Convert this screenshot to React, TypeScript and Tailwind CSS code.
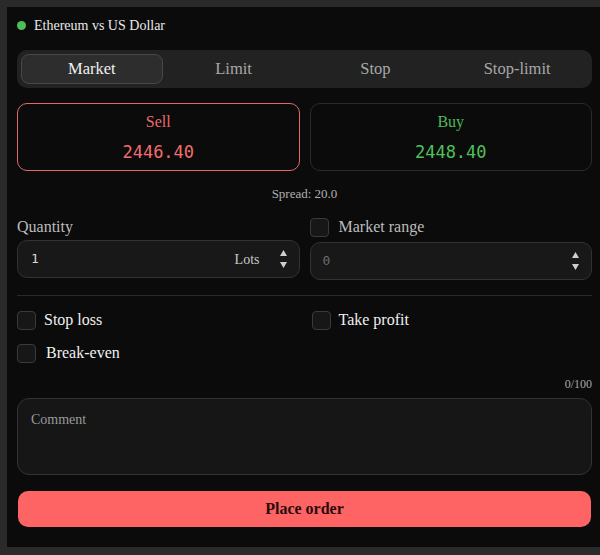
import React from "react";

const serif = { fontFamily: '"Liberation Serif", "Times New Roman", serif' };

function Spinner() {
  return (
    <div className="flex flex-col items-center gap-[6px] text-[#cfcfcf]">
      <svg width="7" height="6" viewBox="0 0 7 6"><path d="M3.5 0L7 6H0Z" fill="currentColor" /></svg>
      <svg width="7" height="6" viewBox="0 0 7 6"><path d="M0 0H7L3.5 6Z" fill="currentColor" /></svg>
    </div>
  );
}

function Check() {
  return <div className="w-[19px] h-[19px] rounded-[4px] border border-[#3a3a3a] bg-[#171717] shrink-0" />;
}

export default function App() {
  const tabs = ["Market", "Limit", "Stop", "Stop-limit"];
  return (
    <div className="w-[600px] h-[555px] bg-[#2a2a2a] pt-[7px] pl-[7px] overflow-hidden" style={serif}>
      <div className="w-[600px] h-[540px] bg-[#0b0b0b] pl-[10px] pt-[8px]">
        <div className="w-[575px] flex flex-col">
          <div className="flex items-center h-[20px] gap-[8px]">
            <div className="w-[9px] h-[9px] rounded-full bg-[#4cc057]" />
            <span className="text-[14px] text-[#e8e8e8]">Ethereum vs US Dollar</span>
          </div>
          <div className="mt-[15px] h-[38px] bg-[#222222] rounded-[10px] p-[4px] grid grid-cols-4">
            {tabs.map((t, i) => (
              <div
                key={t}
                className={
                  "flex items-center justify-center rounded-[8px] text-[16.5px] " +
                  (i === 0 ? "bg-[#2d2d2d] border border-[#484848] text-[#f0f0f0]" : "text-[#a8a8a8]")
                }
              >
                {t}
              </div>
            ))}
          </div>
          <div className="mt-[15px] grid grid-cols-2 gap-[10px]">
            <div className="h-[68px] rounded-[10px] border border-[#e06a6a] flex flex-col items-center justify-center gap-[11px]">
              <span className="text-[16px] text-[#e86a6a] leading-[18px]">Sell</span>
              <span className="text-[17px] text-[#f26d6d] leading-[20px]" style={{ fontFamily: '"DejaVu Sans Mono", monospace' }}>2446.40</span>
            </div>
            <div className="h-[68px] rounded-[10px] border border-[#2a2a2a] flex flex-col items-center justify-center gap-[11px]">
              <span className="text-[16px] text-[#4fb85a] leading-[18px]">Buy</span>
              <span className="text-[17px] text-[#4fc05b] leading-[20px]" style={{ fontFamily: '"DejaVu Sans Mono", monospace' }}>2448.40</span>
            </div>
          </div>
          <div className="mt-[15px] text-center text-[13px] text-[#b0b0b0] leading-[16px]">Spread: 20.0</div>
          <div className="mt-[15px] grid grid-cols-2 gap-[10px]">
            <div className="flex flex-col">
              <div className="h-[20px] flex items-center text-[16px] text-[#bdbdbd]">Quantity</div>
              <div className="mt-[3px] h-[38px] rounded-[10px] bg-[#181818] border border-[#323232] flex items-center pl-[13px] pr-[12px]">
                <span className="text-[13px] text-[#d8d8d8] flex-1" style={{ fontFamily: '"DejaVu Sans Mono", monospace' }}>1</span>
                <span className="text-[14px] text-[#c8c8c8] mr-[20px]">Lots</span>
                <Spinner />
              </div>
            </div>
            <div className="flex flex-col">
              <div className="h-[20px] flex items-center gap-[10px]">
                <Check />
                <span className="text-[16px] text-[#bdbdbd]">Market range</span>
              </div>
              <div className="mt-[5px] h-[38px] rounded-[10px] bg-[#181818] border border-[#323232] flex items-center pl-[12px] pr-[12px]">
                <span className="text-[13px] text-[#6a6a6a] flex-1" style={{ fontFamily: '"DejaVu Sans Mono", monospace' }}>0</span>
                <Spinner />
              </div>
            </div>
          </div>
          <div className="mt-[15px] h-px bg-[#2a2a2a]" />
          <div className="mt-[14px] grid grid-cols-2 gap-[10px]">
            <div className="flex items-center gap-[8px] h-[20px]">
              <Check />
              <span className="text-[16px] text-[#f0f0f0]">Stop loss</span>
            </div>
            <div className="flex items-center gap-[8px] h-[20px] pl-[2px]">
              <Check />
              <span className="text-[16px] text-[#f0f0f0]">Take profit</span>
            </div>
          </div>
          <div className="mt-[13px] flex items-center gap-[10px] h-[20px]">
            <Check />
            <span className="text-[16px] text-[#f0f0f0]">Break-even</span>
          </div>
          <div className="mt-[14px] text-right text-[12px] text-[#a8a8a8] leading-[14px]">0/100</div>
          <div className="mt-[7px] h-[77px] rounded-[12px] bg-[#161616] border border-[#333333] px-[13px] pt-[8px]">
            <span className="text-[14px] text-[#9a9a9a]">Comment</span>
          </div>
          <div className="mt-[16px] mx-[1px] h-[36px] rounded-[10px] bg-[#ff6464] flex items-center justify-center">
            <span className="text-[16px] font-bold text-[#2a0c0c]">Place order</span>
          </div>
        </div>
      </div>
    </div>
  );
}
